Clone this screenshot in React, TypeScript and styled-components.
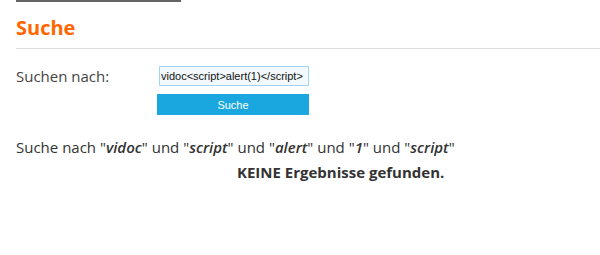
import React from 'react';
import styled, { createGlobalStyle } from 'styled-components';

const terms = ['vidoc', 'script', 'alert', '1', 'script'];

function App() {
  return (
    <>
      <GlobalStyle />
      <Page>
        <TopRule />
        <Heading>Suche</Heading>
        <Form onSubmit={(e) => e.preventDefault()}>
          <Label htmlFor="q">Suchen nach:</Label>
          <Fields>
            <Input id="q" type="text" defaultValue="vidoc<script>alert(1)</script>" />
            <Button type="submit">Suche</Button>
          </Fields>
        </Form>
        <Summary>
          Suche nach{' '}
          {terms.map((t, i) => (
            <React.Fragment key={i}>
              {i > 0 && ' und '}"<Term>{t}</Term>"
            </React.Fragment>
          ))}
        </Summary>
        <NoResults>KEINE Ergebnisse gefunden.</NoResults>
      </Page>
    </>
  );
}

// Styles
const GlobalStyle = createGlobalStyle`
  html, body {
    margin: 0;
    padding: 0;
    background: #fff;
  }
  body {
    font-family: "Open Sans", "DejaVu Sans", sans-serif;
    color: #333;
  }
`;

const Page = styled.div`
  padding-left: 16px;
  width: 584px;
  height: 255px;
  overflow: hidden;
`;

const TopRule = styled.div`
  width: 165px;
  height: 2px;
  background: #646464;
`;

const Heading = styled.h1`
  margin: 0;
  padding-top: 14px;
  padding-bottom: 8px;
  font-size: 20px;
  line-height: 24px;
  font-weight: 700;
  color: #ff6600;
  border-bottom: 1px solid #ddd;
`;

const Form = styled.form`
  display: flex;
  margin-top: 17px;
`;

const Label = styled.label`
  width: 141px;
  font-size: 15px;
  line-height: 20px;
  color: #444;
`;

const Fields = styled.div`
  display: flex;
  flex-direction: column;
  gap: 8px;
  width: 152px;
`;

const Input = styled.input`
  box-sizing: border-box;
  margin-left: 2px;
  width: 150px;
  height: 20px;
  padding: 0 1px;
  border: 1px solid #9fd5f0;
  background: #f3f9fc;
  font-family: "Liberation Sans", Arial, sans-serif;
  font-size: 11px;
  color: #111;
  outline: none;
`;

const Button = styled.button`
  width: 152px;
  height: 21px;
  padding: 0;
  border: none;
  background: #1aa7e0;
  color: #fff;
  font-family: "Liberation Sans", Arial, sans-serif;
  font-size: 11px;
  cursor: pointer;
`;

const Summary = styled.p`
  margin: 21px 0 0;
  font-size: 15px;
  line-height: 22px;
  color: #333;
`;

const Term = styled.em`
  font-weight: 600;
  font-style: italic;
`;

const NoResults = styled.p`
  margin: 3px 0 0 221px;
  font-size: 15px;
  line-height: 22px;
  font-weight: 700;
  color: #333;
`;

export default App;
